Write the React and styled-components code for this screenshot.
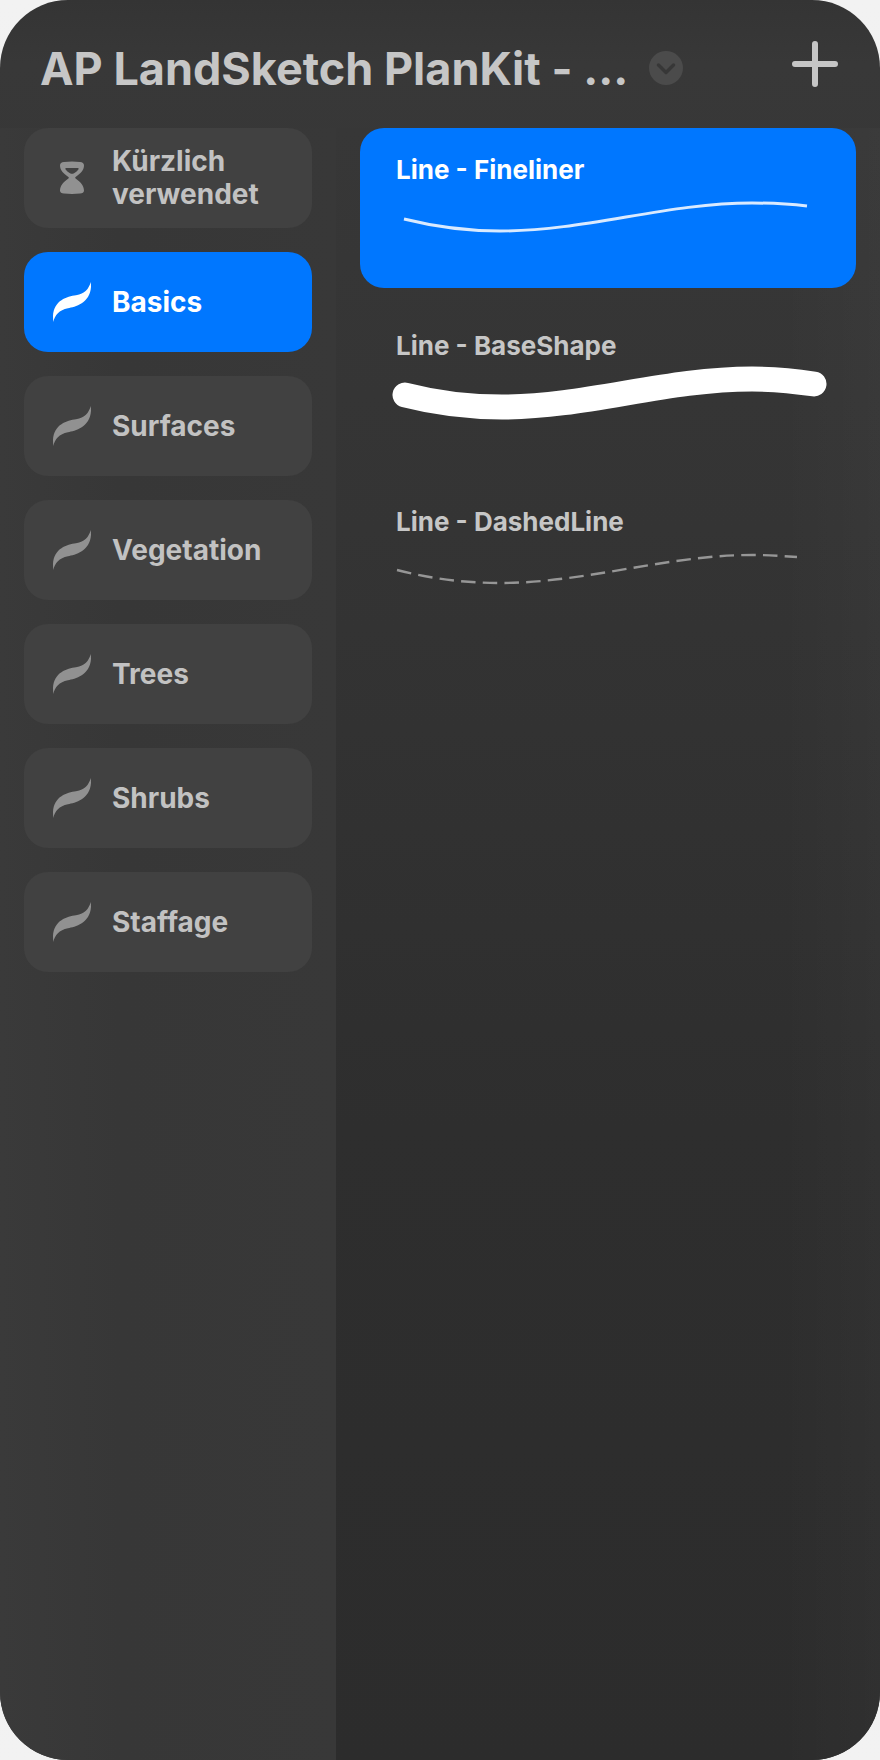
import { useState } from "react";
import styled, { createGlobalStyle } from "styled-components";

const GlobalStyle = createGlobalStyle`
  * {
    box-sizing: border-box;
  }

  body {
    margin: 0;
    background: linear-gradient(#f2f2f2, #ededed 50%, #f2f2f2);
    font-family: Inter, "Liberation Sans", sans-serif;
  }

  button {
    border: none;
    padding: 0;
    background: none;
    color: inherit;
    font: inherit;
    cursor: pointer;
  }
`;

const Panel = styled.div`
  display: flex;
  flex-direction: column;
  min-height: 100vh;
  border-radius: 68px;
  overflow: hidden;
  background: linear-gradient(#343434, #383838 64px, #363636 300px, #383838);
  color: #c6c6c6;
`;

const Header = styled.header`
  display: flex;
  align-items: center;
  height: 128px;
  padding: 10px 40px 0;
`;

const Title = styled.h1`
  margin: 0;
  font-size: 45px;
  font-weight: 700;
  line-height: 56px;
  white-space: nowrap;
`;

const SetMenuButton = styled.button`
  display: flex;
  margin-left: 20px;
`;

const AddButton = styled.button`
  display: flex;
  margin-left: auto;
  margin-bottom: 10px;
`;

const Content = styled.div`
  display: flex;
  flex: 1;
`;

const Sidebar = styled.nav`
  display: flex;
  flex-direction: column;
  gap: 24px;
  width: 336px;
  padding: 0 24px 24px;
  background: linear-gradient(90deg, #3a3a3a, #373737 120px, #383838);
`;

const SetButton = styled.button`
  && {
    display: flex;
    align-items: center;
    gap: 16px;
    height: 100px;
    padding: 0 24px;
    border-radius: 24px;
    background: ${(props) => (props.$active ? "#0077ff" : "#414141")};
    color: ${(props) => (props.$active ? "#ffffff" : "#c2c2c2")};
    font-size: 28px;
    font-weight: 700;
    line-height: 33px;
    text-align: left;
  }

  svg {
    flex: none;
    color: ${(props) => (props.$active ? "#ffffff" : "#919191")};
  }
`;

const BrushList = styled.main`
  display: flex;
  flex: 1;
  flex-direction: column;
  gap: 16px;
  padding: 0 24px 24px;
  background:
    linear-gradient(270deg, rgba(255, 255, 255, 0.02), transparent 100px),
    linear-gradient(#373737, #343434 400px, #2e2e2e 1000px, #2c2c2c);
`;

const BrushCard = styled.button`
  && {
    display: flex;
    flex-direction: column;
    min-height: 160px;
    padding-top: 27px;
    border-radius: 24px;
    background: ${(props) => (props.$active ? "#0077ff" : "transparent")};
    color: ${(props) => (props.$active ? "#ffffff" : "#c6c6c6")};
    text-align: left;
  }
`;

const BrushName = styled.span`
  padding: 0 36px;
  font-size: 26px;
  font-weight: 700;
  line-height: 30px;
`;

const Stroke = styled.svg`
  display: block;
  width: 100%;
  fill: none;
`;

const brushSets = [
  { name: "Kürzlich verwendet", recent: true },
  { name: "Basics" },
  { name: "Surfaces" },
  { name: "Vegetation" },
  { name: "Trees" },
  { name: "Shrubs" },
  { name: "Staffage" },
];

const brushes = [
  {
    name: "Line - Fineliner",
    path: "M44 34C76 42 108 46 140 46C226 46 306 18 392 18C412 18 430 19 447 21",
    stroke: "#d9eaff",
    width: 3,
  },
  {
    name: "Line - BaseShape",
    path: "M45 34C76 42 108 46 142 46C226 46 306 18 392 18C414 18 434 20 454 23",
    stroke: "#ffffff",
    width: 25,
    cap: "round",
  },
  {
    name: "Line - DashedLine",
    path: "M37 33C72 42 106 46 140 46C226 46 306 18 392 18C407 18 422 19 437 20",
    stroke: "#969696",
    width: 2.4,
    dash: "14.5 7.2",
  },
];

function HourglassIcon() {
  return (
    <svg width="48" height="48" viewBox="0 0 48 48" fill="currentColor" aria-hidden="true">
      <path
        fillRule="evenodd"
        d="M12 11.500C12 9 13.500 8.400 16 8Q24 6.800 32 8C34.500 8.400 36 9 36 11.500C36 16.500 32 20 27.600 22.900Q26.600 23.700 27.600 24.500C32 27.500 36 31.500 36 36.500C36 38.700 34.500 39.300 32 39.600Q24 40.500 16 39.600C13.500 39.300 12 38.700 12 36.500C12 31.500 16 27.500 20.400 24.500Q21.400 23.700 20.400 22.900C16 20 12 16.500 12 11.500ZM18.500 14C17.300 14 17 14.700 17.800 15.700Q19.500 17.900 22 19.300Q24 20.300 26 19.300Q28.500 17.900 30.200 15.700C31 14.700 30.700 14 29.500 14Z"
      />
    </svg>
  );
}

function BrushIcon() {
  return (
    <svg width="48" height="48" viewBox="0 0 48 48" fill="currentColor" aria-hidden="true">
      <path d="M42.900 4C40.500 11 37 15.800 28 17.200C19 18.500 6 22 5 38L5.200 44C7 37 11 32 20 30.200C27 29 42 25 43 9Z" />
    </svg>
  );
}

export default function App() {
  const [activeSet, setActiveSet] = useState("Basics");
  const [activeBrush, setActiveBrush] = useState("Line - Fineliner");

  return (
    <>
      <GlobalStyle />
      <Panel>
        <Header>
          <Title>AP LandSketch PlanKit - ...</Title>
          <SetMenuButton aria-label="Choose library">
            <svg width="36" height="36" viewBox="0 0 36 36" fill="none">
              <circle cx="18" cy="17" r="17" fill="#4b4b4b" />
              <path
                d="M10.500 14L18 21.500L25.500 14"
                stroke="#373737"
                strokeWidth="3.500"
                strokeLinecap="round"
                strokeLinejoin="round"
              />
            </svg>
          </SetMenuButton>
          <AddButton aria-label="Add brush">
            <svg width="50" height="50" viewBox="0 0 50 50" fill="none">
              <path
                d="M25 5V45M5 25H45"
                stroke="#c6c6c6"
                strokeWidth="6"
                strokeLinecap="round"
              />
            </svg>
          </AddButton>
        </Header>

        <Content>
          <Sidebar>
            {brushSets.map((set) => (
              <SetButton
                key={set.name}
                $active={set.name === activeSet}
                onClick={() => setActiveSet(set.name)}
              >
                {set.recent ? <HourglassIcon /> : <BrushIcon />}
                <span>{set.name}</span>
              </SetButton>
            ))}
          </Sidebar>

          <BrushList>
            {brushes.map((brush) => (
              <BrushCard
                key={brush.name}
                $active={brush.name === activeBrush}
                onClick={() => setActiveBrush(brush.name)}
              >
                <BrushName>{brush.name}</BrushName>
                <Stroke viewBox="0 0 496 103" aria-hidden="true">
                  <path
                    d={brush.path}
                    stroke={brush.stroke}
                    strokeWidth={brush.width}
                    strokeLinecap={brush.cap}
                    strokeDasharray={brush.dash}
                  />
                </Stroke>
              </BrushCard>
            ))}
          </BrushList>
        </Content>
      </Panel>
    </>
  );
}
